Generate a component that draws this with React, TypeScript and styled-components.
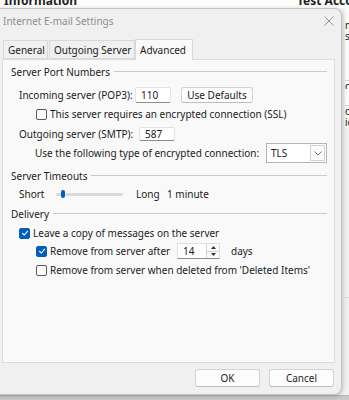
import React from "react";
import styled, { createGlobalStyle } from "styled-components";

const Global = createGlobalStyle`
  html, body { margin: 0; padding: 0; }
  body {
    width: 349px; height: 400px; overflow: hidden;
    background: #fbfbfb;
    font-family: "Noto Sans", "Open Sans", sans-serif;
    color: #1b1b1b;
  }
`;

const Stage = styled.div`
  position: relative;
  width: 349px;
  height: 400px;
  overflow: hidden;
  background: #f7f7f7;
`;

const BackTop = styled.div`
  display: flex;
  height: 8px;
  overflow: hidden;
  background: #fdfdfd;
  font-size: 12px;
  font-weight: 700;
  line-height: 8px;
  color: #222;
  padding: 0 0 0 4px;
`;

const BackTopText = styled.span<{ $w?: number }>`
  margin-top: -3px;
  white-space: nowrap;
  width: ${(p) => (p.$w ? p.$w + "px" : "auto")};
  flex-shrink: 0;
`;

const BackRight = styled.div`
  display: flex;
  flex-direction: column;
  align-items: flex-end;
  height: 387px;
  font-size: 10px;
  color: #222;
  background: #f3f3f3;
`;

const BackLine = styled.div<{ $h: number; $bg?: string; $border?: boolean }>`
  width: 4px;
  height: ${(p) => p.$h}px;
  background: ${(p) => p.$bg || "#fafafa"};
  border-bottom: ${(p) => (p.$border ? "1px solid #d6d6d6" : "none")};
  overflow: hidden;
  white-space: nowrap;
  line-height: 11px;
`;

const BackBottom = styled.div`
  height: 5px;
  background: #c9c9c9;
  border-top: 1px solid #b9b9b9;
`;

const Dialog = styled.div`
  position: absolute;
  left: -6px;
  top: 8px;
  width: 348px;
  height: 387px;
  box-sizing: border-box;
  background: #f0f0f0;
  border: 1px solid #c4c4c4;
  border-radius: 0 8px 8px 0;
  box-shadow: 1px 1px 4px rgba(0, 0, 0, 0.22);
  display: flex;
  flex-direction: column;
  padding: 0 7px 0 7px;
`;

const TitleBar = styled.div`
  height: 23px;
  display: flex;
  align-items: center;
  justify-content: space-between;
  padding: 0 0 0 1px;
  font-size: 10px;
  color: #8e8e8e;
`;

const CloseIcon = styled.svg`
  width: 10px;
  height: 10px;
`;

const Tabs = styled.div`
  margin-top: 7px;
  display: flex;
  align-items: flex-end;
  height: 20px;
  position: relative;
  z-index: 2;
`;

const Tab = styled.div<{ $active?: boolean; $w: number }>`
  width: ${(p) => p.$w}px;
  box-sizing: border-box;
  height: ${(p) => (p.$active ? 21 : 19)}px;
  margin-bottom: ${(p) => (p.$active ? -1 : 0)}px;
  margin-left: ${(p) => (p.$active ? 0 : 1)}px;
  background: ${(p) => (p.$active ? "#f9f9f9" : "#f0f0f0")};
  border: 1px solid #d9d9d9;
  border-bottom: ${(p) => (p.$active ? "none" : "1px solid #d9d9d9")};
  font-size: 10px;
  display: flex;
  align-items: ${(p) => (p.$active ? "flex-start" : "center")};
  padding: ${(p) => (p.$active ? "3px 0 0 4px" : "1px 0 0 4px")};
  white-space: nowrap;
  color: #1b1b1b;
`;

const Panel = styled.div`
  height: 304px;
  width: 333px;
  box-sizing: border-box;
  background: #f9f9f9;
  border: 1px solid #dcdcdc;
  display: flex;
  flex-direction: column;
  padding: 0 7px 0 0;
`;

const Row = styled.div<{ $mt: number; $h: number }>`
  margin-top: ${(p) => p.$mt}px;
  height: ${(p) => p.$h}px;
  display: flex;
  align-items: center;
  font-size: 10px;
  white-space: nowrap;
`;

const GroupHead = styled(Row)`
  padding-left: 8px;
  &::after {
    content: "";
    flex: 1;
    height: 1px;
    background: #c9c9c9;
    margin-left: 4px;
    margin-top: -1px;
  }
`;

const Label = styled.span<{ $ml?: number; $w?: number }>`
  margin-left: ${(p) => p.$ml || 0}px;
  width: ${(p) => (p.$w ? p.$w + "px" : "auto")};
  flex-shrink: 0;
`;

const TextBox = styled.div<{ $w: number; $h: number }>`
  width: ${(p) => p.$w}px;
  height: ${(p) => p.$h}px;
  box-sizing: border-box;
  background: #fff;
  border: 1px solid #e3e3e3;
  border-bottom: 1px solid #8c8c8c;
  border-radius: 2px;
  padding-left: 5px;
  display: flex;
  align-items: center;
  font-size: 10px;
`;

const Button = styled.div<{ $w: number; $h: number; $ml?: number }>`
  width: ${(p) => p.$w}px;
  height: ${(p) => p.$h}px;
  margin-left: ${(p) => p.$ml || 0}px;
  box-sizing: border-box;
  background: #fdfdfd;
  border: 1px solid #d3d3d3;
  border-bottom-color: #bdbdbd;
  border-radius: 3px;
  display: flex;
  align-items: center;
  justify-content: center;
  font-size: 10px;
  color: #1b1b1b;
`;

const Box = styled.div<{ $checked?: boolean; $ml: number }>`
  margin-left: ${(p) => p.$ml}px;
  margin-right: 3px;
  width: 11px;
  height: 11px;
  box-sizing: border-box;
  border-radius: 2px;
  border: 1px solid ${(p) => (p.$checked ? "#005fb8" : "#5a5a5a")};
  background: ${(p) => (p.$checked ? "#005fb8" : "#fbfbfb")};
  display: flex;
  align-items: center;
  justify-content: center;
  flex-shrink: 0;
`;

const Select = styled.div`
  margin-left: auto;
  width: 61px;
  height: 20px;
  box-sizing: border-box;
  background: #fff;
  border: 1px solid #b4b4b4;
  display: flex;
  align-items: center;
  padding: 1px 1px 1px 4px;
  font-size: 10px;
`;

const DropBtn = styled.div`
  margin-left: auto;
  width: 15px;
  height: 16px;
  box-sizing: border-box;
  border: 1px solid #d2d2d2;
  background: #fbfbfb;
  display: flex;
  align-items: center;
  justify-content: center;
`;

const Track = styled.div`
  margin-left: 10px;
  width: 67px;
  height: 3px;
  background: #dadada;
  border-radius: 2px;
  position: relative;
`;

const Thumb = styled.div`
  position: absolute;
  left: 5px;
  top: -3px;
  width: 4px;
  height: 8px;
  border-radius: 2px;
  background: #005fb8;
`;

const Spin = styled.div`
  width: 43px;
  height: 16px;
  box-sizing: border-box;
  background: #fff;
  border: 1px solid #e0e0e0;
  border-bottom-color: #8c8c8c;
  display: flex;
  align-items: center;
  padding-left: 5px;
  font-size: 10px;
`;

const SpinBtns = styled.div`
  margin-left: auto;
  width: 12px;
  height: 14px;
  display: flex;
  flex-direction: column;
  border-left: 1px solid #d6d6d6;
`;

const SpinHalf = styled.div`
  flex: 1;
  display: flex;
  align-items: center;
  justify-content: center;
  background: #fafafa;
  & + & { border-top: 1px solid #d6d6d6; }
`;

const Footer = styled.div`
  display: flex;
  justify-content: flex-end;
  gap: 9px;
  margin-top: 6px;
`;

const Check = () => (
  <svg width="8" height="8" viewBox="0 0 8 8">
    <path d="M1.2 4.2 L3.2 6 L6.9 1.8" fill="none" stroke="#fff" strokeWidth="1.1" />
  </svg>
);

const Tri = ({ up }: { up?: boolean }) => (
  <svg width="5" height="3" viewBox="0 0 5 3">
    <path d={up ? "M0 3 L2.5 0 L5 3 Z" : "M0 0 L2.5 3 L5 0 Z"} fill="#333" />
  </svg>
);

export default function App() {
  return (
    <Stage>
      <Global />
      <BackTop>
        <BackTopText $w={293}>Information</BackTopText>
        <BackTopText>Test Account</BackTopText>
      </BackTop>
      <BackRight>
        <BackLine $h={12} />
        <BackLine $h={11}>m</BackLine>
        <BackLine $h={12}>s</BackLine>
        <BackLine $h={38} $border />
        <BackLine $h={8}>ou</BackLine>
        <BackLine $h={16} $border />
        <BackLine $h={11}>o</BackLine>
        <BackLine $h={11}>ic</BackLine>
        <BackLine $h={170} $bg="#f1f1f1" $border />
        <BackLine $h={98} $bg="#f1f1f1" />
      </BackRight>
      <BackBottom />
      <Dialog>
        <TitleBar>
          <span>Internet E-mail Settings</span>
          <CloseIcon viewBox="0 0 10 10">
            <path d="M0.5 0.5 L9.5 9.5 M9.5 0.5 L0.5 9.5" stroke="#8a8a8a" strokeWidth="0.9" />
          </CloseIcon>
        </TitleBar>
        <Tabs>
          <Tab $w={45}>General</Tab>
          <Tab $w={86}>Outgoing Server</Tab>
          <Tab $w={58} $active>Advanced</Tab>
        </Tabs>
        <Panel>
          <GroupHead $mt={4} $h={16}>Server Port Numbers</GroupHead>
          <Row $mt={6} $h={18}>
            <Label $ml={16} $w={116}>Incoming server (POP3):</Label>
            <TextBox $w={36} $h={16}>110</TextBox>
            <Button $w={72} $h={16} $ml={10}>Use Defaults</Button>
          </Row>
          <Row $mt={1} $h={18}>
            <Box $ml={33} />
            <Label>This server requires an encrypted connection (SSL)</Label>
          </Row>
          <Row $mt={2} $h={17}>
            <Label $ml={16} $w={120}>Outgoing server (SMTP):</Label>
            <TextBox $w={36} $h={14}>587</TextBox>
          </Row>
          <Row $mt={1} $h={20}>
            <Label $ml={32}>Use the following type of encrypted connection:</Label>
            <Select>
              TLS
              <DropBtn>
                <svg width="8" height="5" viewBox="0 0 8 5">
                  <path d="M0.5 0.5 L4 4 L7.5 0.5" fill="none" stroke="#666" strokeWidth="0.9" />
                </svg>
              </DropBtn>
            </Select>
          </Row>
          <GroupHead $mt={5} $h={16}>Server Timeouts</GroupHead>
          <Row $mt={2} $h={16}>
            <Label $ml={16} $w={27}>Short</Label>
            <Track>
              <Thumb />
            </Track>
            <Label $ml={13} $w={31}>Long</Label>
            <Label>1 minute</Label>
          </Row>
          <GroupHead $mt={4} $h={16}>Delivery</GroupHead>
          <Row $mt={2} $h={18}>
            <Box $ml={16} $checked>
              <Check />
            </Box>
            <Label>Leave a copy of messages on the server</Label>
          </Row>
          <Row $mt={0} $h={18}>
            <Box $ml={33} $checked>
              <Check />
            </Box>
            <Label $w={127}>Remove from server after</Label>
            <Spin>
              14
              <SpinBtns>
                <SpinHalf>
                  <Tri up />
                </SpinHalf>
                <SpinHalf>
                  <Tri />
                </SpinHalf>
              </SpinBtns>
            </Spin>
            <Label $ml={11}>days</Label>
          </Row>
          <Row $mt={1} $h={18}>
            <Box $ml={33} />
            <Label>Remove from server when deleted from 'Deleted Items'</Label>
          </Row>
        </Panel>
        <Footer>
          <Button $w={65} $h={18}>OK</Button>
          <Button $w={65} $h={18}>Cancel</Button>
        </Footer>
      </Dialog>
    </Stage>
  );
}
